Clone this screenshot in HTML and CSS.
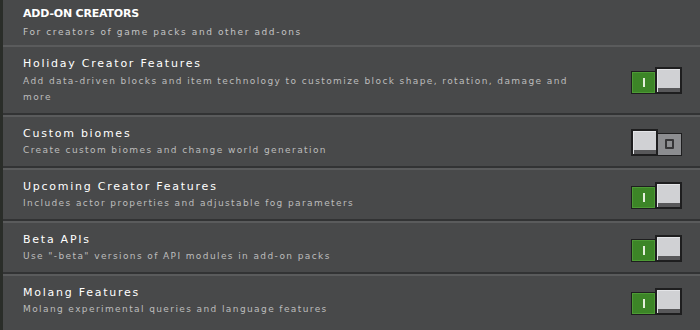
FILE: index.html
```html
<!DOCTYPE html>
<html>
<head>
<meta charset="utf-8">
<link rel="stylesheet" href="styles.css">
</head>
<body>
<div class="panel">
  <div class="header">
    <div class="h-title">ADD-ON CREATORS</div>
    <div class="h-sub">For creators of game packs and other add-ons</div>
  </div>
  <div class="row first">
    <div class="text">
      <div class="title">Holiday Creator Features</div>
      <div class="sub">Add data-driven blocks and item technology to customize block shape, rotation, damage and more</div>
    </div>
    <div class="toggle on"><span class="track"><span class="mark-i"></span></span><span class="knob"></span></div>
  </div>
  <div class="row">
    <div class="text">
      <div class="title">Custom biomes</div>
      <div class="sub">Create custom biomes and change world generation</div>
    </div>
    <div class="toggle off"><span class="knob"></span><span class="track"><span class="mark-o"></span></span></div>
  </div>
  <div class="row">
    <div class="text">
      <div class="title">Upcoming Creator Features</div>
      <div class="sub">Includes actor properties and adjustable fog parameters</div>
    </div>
    <div class="toggle on"><span class="track"><span class="mark-i"></span></span><span class="knob"></span></div>
  </div>
  <div class="row">
    <div class="text">
      <div class="title">Beta APIs</div>
      <div class="sub">Use "-beta" versions of API modules in add-on packs</div>
    </div>
    <div class="toggle on"><span class="track"><span class="mark-i"></span></span><span class="knob"></span></div>
  </div>
  <div class="row">
    <div class="text">
      <div class="title">Molang Features</div>
      <div class="sub">Molang experimental queries and language features</div>
    </div>
    <div class="toggle on"><span class="track"><span class="mark-i"></span></span><span class="knob"></span></div>
  </div>
</div>
</body>
</html>
```

FILE: styles.css
```css
html, body {
  margin: 0;
  padding: 0;
  background: #48494a;
  overflow: hidden;
}
.panel {
  width: 700px;
  height: 330px;
  box-sizing: border-box;
  border-left: 3px solid #2a2d29;
  background: #48494a;
  font-family: "DejaVu Sans", sans-serif;
}
.header {
  height: 47px;
  box-sizing: border-box;
  padding: 4px 18px 0 20px;
  border-bottom: 2px solid #5a5b5c;
}
.h-title {
  font-size: 11px;
  font-weight: bold;
  line-height: 20px;
  color: #ffffff;
  letter-spacing: -0.2px;
}
.h-sub {
  font-size: 9px;
  line-height: 16.5px;
  color: #c4c4c4;
  letter-spacing: 1.6px;
}
.row {
  display: flex;
  align-items: center;
  padding: 11px 18px 7px 20px;
  border-top: 2px solid #323334;
  box-shadow: inset 0 2px 0 #5a5b5c;
}
.row.first {
  border-top: none;
  box-shadow: none;
  padding-top: 9px;
}
.text {
  flex: 1;
  min-width: 0;
  padding-right: 50px;
}
.title {
  font-size: 11px;
  line-height: 16.5px;
  color: #ffffff;
  letter-spacing: 1.75px;
}
.sub {
  font-size: 9px;
  line-height: 16.5px;
  color: #bdbdbd;
  letter-spacing: 1.4px;
}
.toggle {
  display: flex;
  align-items: flex-end;
  flex-shrink: 0;
}
.track {
  width: 25px;
  height: 23px;
  box-sizing: border-box;
  border: 1px solid #1e1e1f;
  display: flex;
  align-items: center;
  justify-content: center;
}
.on .track {
  background: #3c8527;
  box-shadow: inset 0 0 0 1px #4d9a35;
}
.off .track {
  background: #8c8d90;
  margin-left: -1px;
}
.knob {
  width: 27px;
  height: 27px;
  box-sizing: border-box;
  border: 2px solid #1e1e1f;
  background: linear-gradient(#d0d1d4 0, #d0d1d4 calc(100% - 4px), #58585a calc(100% - 4px));
  box-shadow: inset 1px 1px 0 #e4e5e8;
}
.on .knob {
  margin-left: -1px;
}
.mark-i {
  width: 2px;
  height: 9px;
  background: #e4efdc;
}
.mark-o {
  width: 9px;
  height: 10px;
  box-sizing: border-box;
  border: 2px solid #353537;
  border-radius: 1px;
}
```
